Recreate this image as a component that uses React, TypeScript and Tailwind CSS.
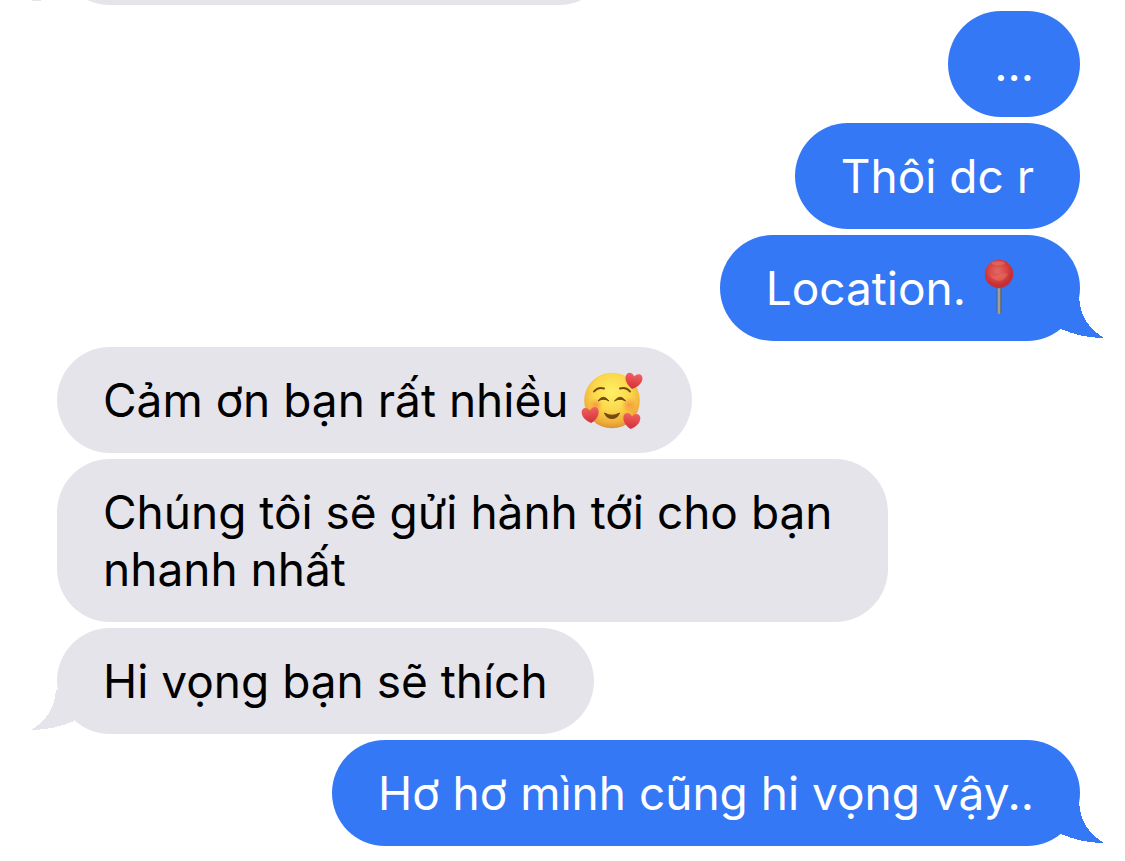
type Message = {
  id: number;
  text: string;
  mine: boolean;
  tail?: boolean;
  emoji?: "pin" | "hearts";
};

const messages: Message[] = [
  { id: 1, text: "...", mine: true },
  { id: 2, text: "Thôi dc r", mine: true },
  { id: 3, text: "Location.", mine: true, tail: true, emoji: "pin" },
  { id: 4, text: "Cảm ơn bạn rất nhiều", mine: false, emoji: "hearts" },
  { id: 5, text: "Chúng tôi sẽ gửi hành tới cho bạn nhanh nhất", mine: false },
  { id: 6, text: "Hi vọng bạn sẽ thích", mine: false, tail: true },
  { id: 7, text: "Hơ hơ mình cũng hi vọng vậy..", mine: true, tail: true },
];

const PinEmoji = () => (
  <svg
    viewBox="9 0 56 60"
    className="h-[60px] w-14 shrink-0"
    role="img"
    aria-label="Pin"
  >
    <defs>
      <radialGradient id="pinHead" cx="0.45" cy="0.4" r="0.6">
        <stop offset="0" stopColor="#e06a62" />
        <stop offset="0.5" stopColor="#d84744" />
        <stop offset="0.85" stopColor="#c52d34" />
        <stop offset="1" stopColor="#b5384a" />
      </radialGradient>
      <linearGradient id="pinNeedle">
        <stop offset="0" stopColor="#55595f" />
        <stop offset="0.5" stopColor="#b3b3ad" />
        <stop offset="1" stopColor="#4c5058" />
      </linearGradient>
    </defs>
    <path d="M27.700 27h4.600v27q-2.300 2-4.600 0z" fill="url(#pinNeedle)" />
    <circle cx="30" cy="15" r="14.200" fill="url(#pinHead)" />
    <ellipse cx="29" cy="4" rx="7" ry="2" fill="#ee9c92" opacity="0.3" />
    <path d="M20 14q5 5 10 2t9-1q-3 7-9 7t-10-8z" fill="#f08e78" opacity="0.3" />
  </svg>
);

const heart =
  "M0 8C-4 6-8.500 2-8.500-3C-8.500-8.500-2.500-9 0-4.500C2.500-9 8.500-8.500 8.500-3C8.500 2 4 6 0 8z";

const HeartsEmoji = () => (
  <svg
    viewBox="-2 0 66 60"
    className="h-[60px] w-[66px] shrink-0"
    role="img"
    aria-label="Smiling face with hearts"
  >
    <defs>
      <radialGradient id="face" cx="0.5" cy="0.35" r="0.65">
        <stop offset="0" stopColor="#fff066" />
        <stop offset="0.5" stopColor="#fbd94b" />
        <stop offset="0.85" stopColor="#f0ae3a" />
        <stop offset="1" stopColor="#dc9133" />
      </radialGradient>
      <radialGradient id="blush">
        <stop offset="0" stopColor="#f58a3c" stopOpacity="0.75" />
        <stop offset="1" stopColor="#f58a3c" stopOpacity="0" />
      </radialGradient>
      <linearGradient id="heart" x2="0" y2="1">
        <stop offset="0" stopColor="#f0625e" />
        <stop offset="1" stopColor="#d32f38" />
      </linearGradient>
    </defs>
    <circle cx="30" cy="29.500" r="27.800" fill="url(#face)" />
    <circle cx="14" cy="34" r="7" fill="url(#blush)" />
    <circle cx="47" cy="34" r="8" fill="url(#blush)" />
    <g fill="none" stroke="#74490f" strokeLinecap="round" strokeWidth="2">
      <path d="M12 20.500q4-5 10-3" />
      <path d="M38 17.500q6-2 10 3" />
    </g>
    <g fill="#74490f" stroke="#74490f">
      <path d="M16 30q5-7.500 11 0q-5.500-3.500-11 0z" />
      <path d="M32.500 30q6-7.500 11 0q-5.500-3.500-11 0z" />
      <path d="M22.500 42q7.500 4.500 15 0q-2 5.500-7.500 5.500t-7.500-5.500z" />
    </g>
    <g fill="url(#heart)">
      <path d={heart} transform="translate(51.500 10) rotate(10)" />
      <path d={heart} transform="translate(8.500 44) rotate(-6)" />
      <path d={heart} transform="translate(49.500 50) rotate(6)" />
    </g>
  </svg>
);

const Tail = ({ mine }: { mine: boolean }) => (
  <svg
    viewBox="0 0 46 40"
    className={
      mine
        ? "absolute -right-6 bottom-[3px] h-10 w-[46px] text-[#3478f6]"
        : "absolute -left-[26px] bottom-1 h-10 w-[46px] -scale-x-100 text-[#e5e4ea]"
    }
    shapeRendering="crispEdges"
    aria-hidden="true"
  >
    <path
      d="M12 0H21C22 18 31 32 46 40C29 40 15 36 3 31z"
      fill="currentColor"
    />
  </svg>
);

const Bubble = ({ message }: { message: Message }) => (
  <li
    className={`relative w-fit max-w-[831px] rounded-[53px] px-[46px] pt-[25px] pb-6 ${
      message.mine
        ? "self-end bg-[#3478f6] text-white"
        : "self-start bg-[#e5e4ea] text-black"
    }`}
  >
    {message.tail && <Tail mine={message.mine} />}
    <p className={message.emoji ? "flex h-[57px] items-center gap-3" : ""}>
      {message.text}
      {message.emoji === "pin" && <PinEmoji />}
      {message.emoji === "hearts" && <HeartsEmoji />}
    </p>
  </li>
);

const App = () => (
  <main className="overflow-hidden bg-white font-['Inter','Noto_Sans',sans-serif] text-[46px] leading-[57px]">
    {/* end of the previous message, scrolled off the top */}
    <div className="flex h-[5px] items-end overflow-hidden pl-[57px]">
      <div className="relative h-[106px] w-[555px] shrink-0 rounded-[53px] bg-[#e5e4ea]">
        <Tail mine={false} />
      </div>
    </div>
    <ul className="flex flex-col gap-1.5 pt-1.5 pr-[45px] pb-[15px] pl-[57px]">
      {messages.map((message) => (
        <Bubble key={message.id} message={message} />
      ))}
    </ul>
  </main>
);

export default App;
